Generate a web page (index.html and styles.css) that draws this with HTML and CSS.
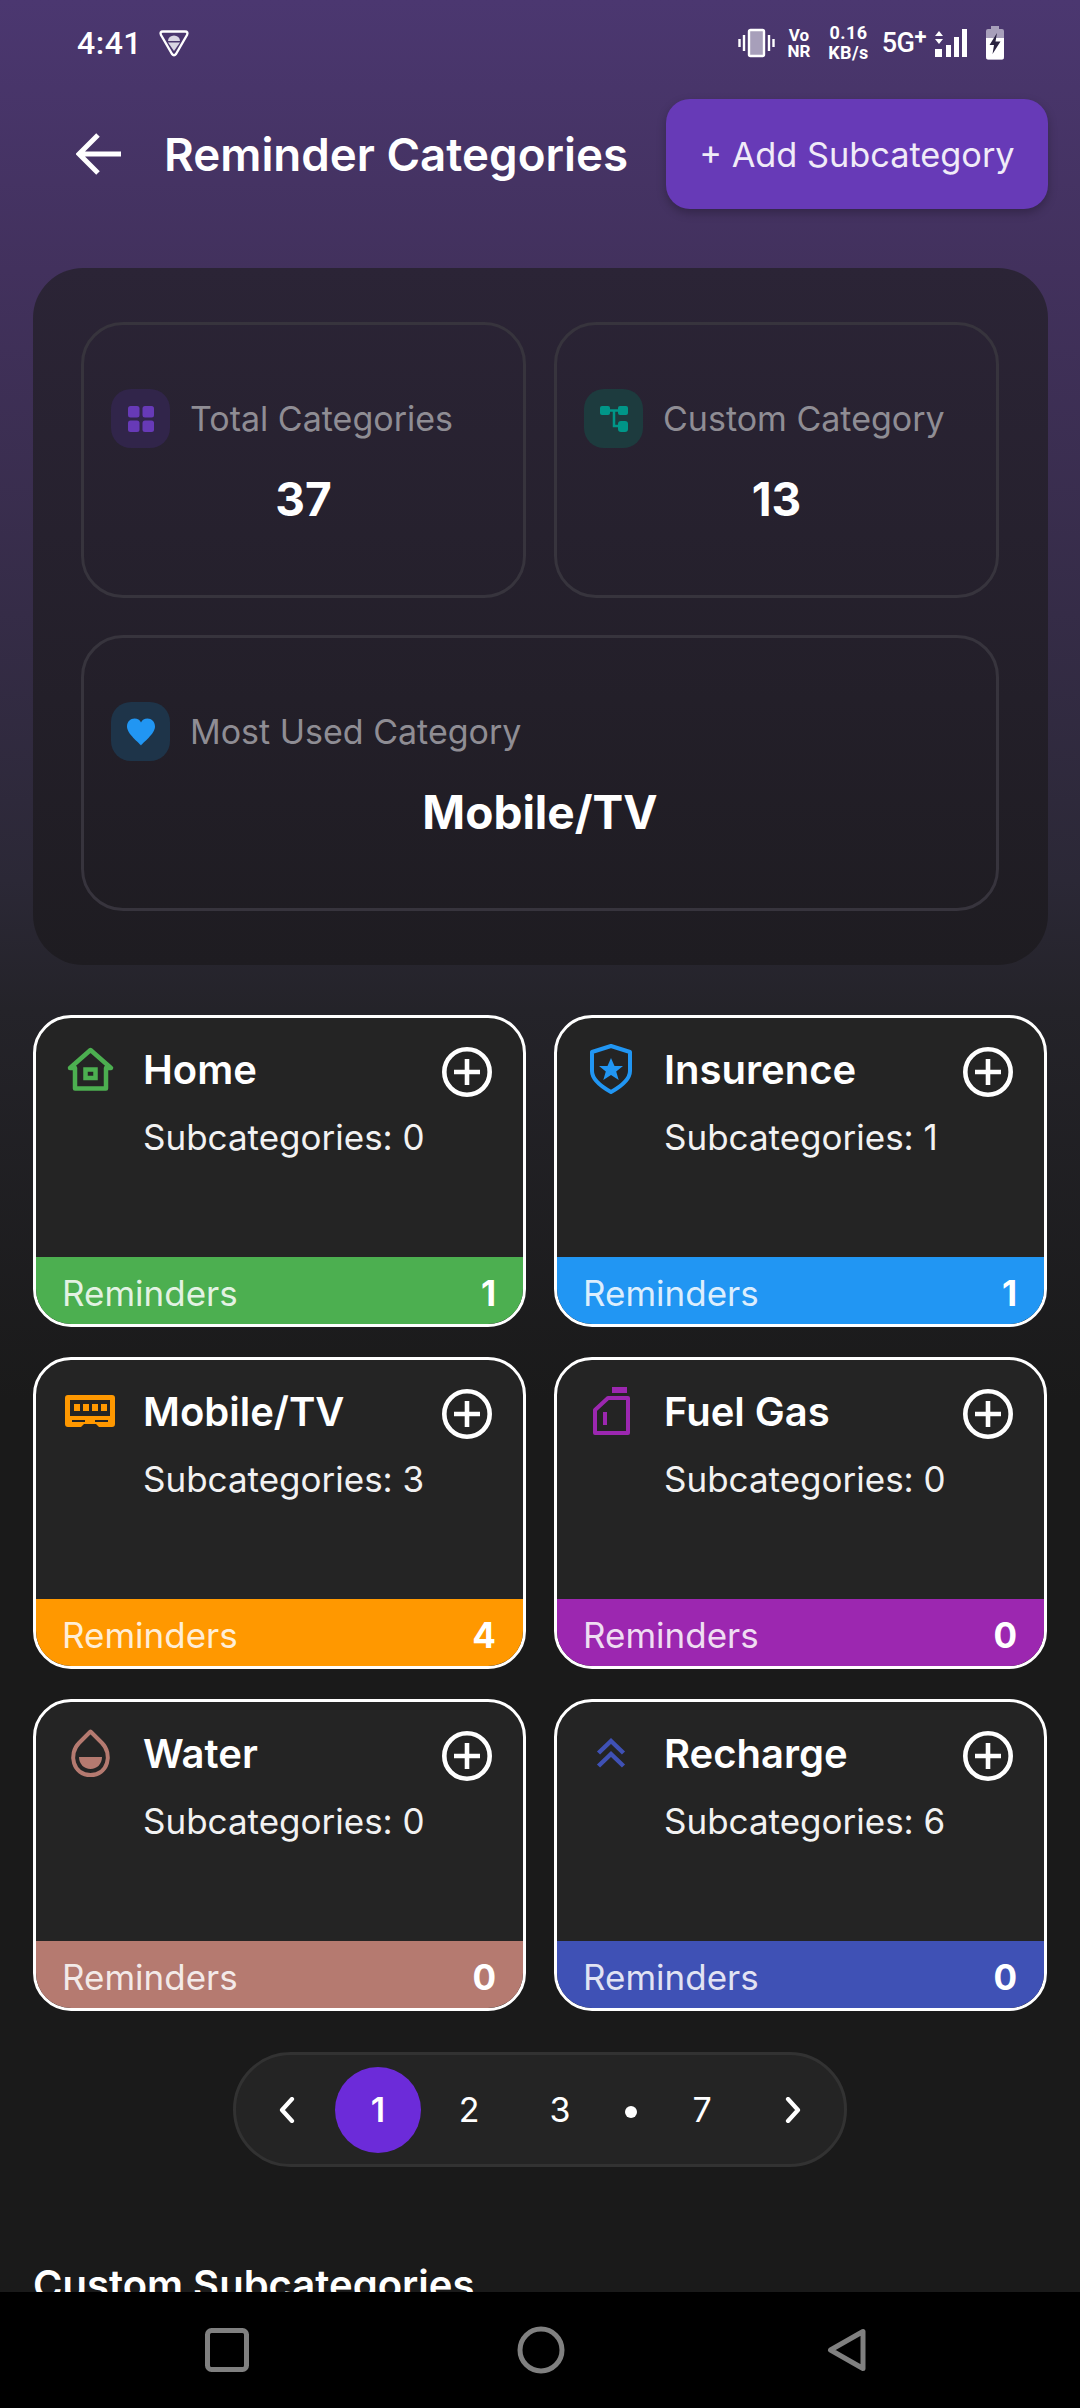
FILE: index.html
```html
<!DOCTYPE html>
<html lang="en">
<head>
    <meta charset="UTF-8">
    <meta name="viewport" content="width=device-width, initial-scale=1.0">
    <title>Reminder Categories</title>
    <link rel="stylesheet" href="styles.css">
</head>
<body>
    <div class="screen">
        <div class="status-bar">
            <div class="status-left">
                <span class="status-time">4:41</span>
                <svg class="status-shield" width="32" height="28" viewBox="0 0 32 28">
                    <path d="M5 2.500H27Q30.500 2.500 29 6L18 25Q16 27.500 14 25L3 6Q1.500 2.500 5 2.500Z" fill="none" stroke="#fff" stroke-width="2.400" stroke-linejoin="round"/>
                    <path d="M10 12A6 5.500 0 0 1 22 12Z" fill="#d9d5e2"/>
                    <path d="M10 13.500H22L16 22Z" fill="#d9d5e2"/>
                </svg>
            </div>
            <div class="status-right">
                <svg width="37" height="30" viewBox="0 0 37 30">
                    <rect x="11" y="2" width="15" height="26" rx="1.500" fill="#a79fba" stroke="#fff" stroke-width="2.400"/>
                    <path d="M1.500 11V19M6 7V23M31 7V23M35.500 11V19" stroke="#fff" stroke-width="2.400"/>
                </svg>
                <span class="status-vonr">Vo<br>NR</span>
                <span class="status-speed">0.16<br>KB/s</span>
                <span class="status-net">5G<sup>+</sup></span>
                <svg width="32" height="30" viewBox="0 0 32 30">
                    <path d="M4 3L8 8H0ZM4 16L0 11H8Z" fill="#fff"/>
                    <rect x="0" y="21" width="7" height="8" fill="#fff"/>
                    <rect x="11" y="17" width="5" height="12" fill="#fff"/>
                    <rect x="19" y="9" width="5" height="20" fill="#fff"/>
                    <rect x="27" y="1" width="5" height="28" fill="#fff"/>
                </svg>
                <svg width="18" height="34" viewBox="0 0 18 34">
                    <path d="M5 0H13V3H16Q18 3 18 5V31Q18 33.500 16 33.500H2Q0 33.500 0 31V5Q0 3 2 3H5Z" fill="#a79fba"/>
                    <path d="M0 12H18V31Q18 33.500 16 33.500H2Q0 33.500 0 31Z" fill="#fff"/>
                    <path d="M11 7L3.500 19H8L6.500 28L14.500 15.500H9.500Z" fill="#2a2340"/>
                </svg>
            </div>
        </div>

        <header class="top-bar">
            <svg class="back-icon" width="46" height="44" viewBox="0 0 46 44">
                <path d="M45 22H3M22 3L3 22L22 41" fill="none" stroke="#fff" stroke-width="5"/>
            </svg>
            <h1 class="page-title">Reminder Categories</h1>
            <button class="add-btn">+ Add Subcategory</button>
        </header>

        <section class="summary">
            <div class="stat-card">
                <div class="stat-head">
                    <span class="stat-icon stat-icon-purple">
                        <svg width="28" height="28" viewBox="0 0 28 28" fill="#673ab7">
                            <rect x="1" y="1" width="11.500" height="11.500" rx="2.500"/>
                            <rect x="15.500" y="1" width="11.500" height="11.500" rx="2.500"/>
                            <rect x="1" y="15.500" width="11.500" height="11.500" rx="2.500"/>
                            <rect x="15.500" y="15.500" width="11.500" height="11.500" rx="2.500"/>
                        </svg>
                    </span>
                    <span class="stat-label">Total Categories</span>
                </div>
                <div class="stat-value">37</div>
            </div>
            <div class="stat-card">
                <div class="stat-head">
                    <span class="stat-icon stat-icon-teal">
                        <svg width="30" height="30" viewBox="0 0 30 30" fill="#009688">
                            <rect x="1" y="2" width="10" height="9" rx="2"/>
                            <rect x="19" y="2" width="10" height="9" rx="2"/>
                            <rect x="19" y="17" width="10" height="11" rx="3"/>
                            <path d="M10 6.500H20M15 6.500V22H20" fill="none" stroke="#009688" stroke-width="2.500"/>
                        </svg>
                    </span>
                    <span class="stat-label">Custom Category</span>
                </div>
                <div class="stat-value">13</div>
            </div>
            <div class="stat-card stat-card-wide">
                <div class="stat-head">
                    <span class="stat-icon stat-icon-blue">
                        <svg width="30" height="28" viewBox="0 0 30 28">
                            <path d="M15 27.500C13 24.500 1 16 1 8.500C1 3.500 4.500 .5 8.500 .5C11.500 .5 14 2 15 4.500C16 2 18.500 .5 21.500 .5C25.500 .5 29 3.500 29 8.500C29 16 17 24.500 15 27.500Z" fill="#2196f3"/>
                        </svg>
                    </span>
                    <span class="stat-label">Most Used Category</span>
                </div>
                <div class="stat-value">Mobile/TV</div>
            </div>
        </section>

        <section class="cat-grid">
            <div class="cat-card">
                <div class="cat-head">
                    <svg class="cat-icon" width="50" height="50" viewBox="0 0 50 50">
                        <path d="M25.500 6L46 24H41V44.500H10V24H5Z" fill="none" stroke="#4caf50" stroke-width="4.500" stroke-linejoin="round"/>
                        <path d="M20.500 25.500H30.500V34H20.500Z" fill="none" stroke="#4caf50" stroke-width="4.500"/>
                    </svg>
                    <span class="cat-name">Home</span>
                    <svg class="plus-icon" width="50" height="50" viewBox="0 0 50 50">
                        <circle cx="25" cy="25" r="22.700" fill="none" stroke="#fff" stroke-width="4.600"/>
                        <path d="M25 12V38M12 25H38" stroke="#fff" stroke-width="4.600"/>
                    </svg>
                </div>
                <div class="cat-sub">Subcategories: 0</div>
                <div class="cat-bar bar-green"><span>Reminders</span><b>1</b></div>
            </div>
            <div class="cat-card">
                <div class="cat-head">
                    <svg class="cat-icon" width="50" height="50" viewBox="0 0 50 50">
                        <path d="M25 2L44 8V27C44 36 34 43 25 48C16 43 6 36 6 27V8Z" fill="none" stroke="#2196f3" stroke-width="4" stroke-linejoin="round"/>
                        <path d="M25 14L28.500 22H37L30.200 27.500L32.700 36L25 31L17.300 36L19.800 27.500L13 22H21.500Z" fill="#2196f3"/>
                    </svg>
                    <span class="cat-name">Insurence</span>
                    <svg class="plus-icon" width="50" height="50" viewBox="0 0 50 50">
                        <circle cx="25" cy="25" r="22.700" fill="none" stroke="#fff" stroke-width="4.600"/>
                        <path d="M25 12V38M12 25H38" stroke="#fff" stroke-width="4.600"/>
                    </svg>
                </div>
                <div class="cat-sub">Subcategories: 1</div>
                <div class="cat-bar bar-blue"><span>Reminders</span><b>1</b></div>
            </div>
            <div class="cat-card">
                <div class="cat-head">
                    <svg class="cat-icon" width="50" height="50" viewBox="0 0 50 50">
                        <path d="M3 9H47A3 3 0 0 1 50 12V38A3 3 0 0 1 47 41H34L31 38H19L16 41H3A3 3 0 0 1 0 38V12A3 3 0 0 1 3 9Z" fill="#ff9800"/>
                        <rect x="5" y="14" width="40" height="16" fill="#242424"/>
                        <path d="M9 18H15V25H9ZM18 18H24V25H18ZM27 18H33V25H27ZM36 18H42V25H36Z" fill="#ff9800"/>
                        <path d="M7 35H20M30 35H43" stroke="#242424" stroke-width="2"/>
                    </svg>
                    <span class="cat-name">Mobile/TV</span>
                    <svg class="plus-icon" width="50" height="50" viewBox="0 0 50 50">
                        <circle cx="25" cy="25" r="22.700" fill="none" stroke="#fff" stroke-width="4.600"/>
                        <path d="M25 12V38M12 25H38" stroke="#fff" stroke-width="4.600"/>
                    </svg>
                </div>
                <div class="cat-sub">Subcategories: 3</div>
                <div class="cat-bar bar-orange"><span>Reminders</span><b>4</b></div>
            </div>
            <div class="cat-card">
                <div class="cat-head">
                    <svg class="cat-icon" width="50" height="50" viewBox="0 0 50 50">
                        <path d="M26 1H41V7H26Z" fill="#9c27b0"/>
                        <path d="M22 12H42V47H9V24Z" fill="none" stroke="#9c27b0" stroke-width="4" stroke-linejoin="round"/>
                        <path d="M17 26H21V39H17Z" fill="#9c27b0"/>
                    </svg>
                    <span class="cat-name">Fuel Gas</span>
                    <svg class="plus-icon" width="50" height="50" viewBox="0 0 50 50">
                        <circle cx="25" cy="25" r="22.700" fill="none" stroke="#fff" stroke-width="4.600"/>
                        <path d="M25 12V38M12 25H38" stroke="#fff" stroke-width="4.600"/>
                    </svg>
                </div>
                <div class="cat-sub">Subcategories: 0</div>
                <div class="cat-bar bar-purple"><span>Reminders</span><b>0</b></div>
            </div>
            <div class="cat-card">
                <div class="cat-head">
                    <svg class="cat-icon" width="50" height="50" viewBox="0 0 50 50">
                        <path d="M25.500 3.500L37 15C48 26 43 47 25.500 47C8 47 3 26 14 15Z" fill="none" stroke="#b57a70" stroke-width="4" stroke-linejoin="round"/>
                        <path d="M14 29H37C37 36 32 41 25.500 41C19 41 14 36 14 29Z" fill="#b57a70"/>
                    </svg>
                    <span class="cat-name">Water</span>
                    <svg class="plus-icon" width="50" height="50" viewBox="0 0 50 50">
                        <circle cx="25" cy="25" r="22.700" fill="none" stroke="#fff" stroke-width="4.600"/>
                        <path d="M25 12V38M12 25H38" stroke="#fff" stroke-width="4.600"/>
                    </svg>
                </div>
                <div class="cat-sub">Subcategories: 0</div>
                <div class="cat-bar bar-rose"><span>Reminders</span><b>0</b></div>
            </div>
            <div class="cat-card">
                <div class="cat-head">
                    <svg class="cat-icon" width="50" height="50" viewBox="0 0 50 50">
                        <path d="M12.500 25L25 13L37.500 25M12.500 38L25 26L37.500 38" fill="none" stroke="#3f51b5" stroke-width="4.500"/>
                    </svg>
                    <span class="cat-name">Recharge</span>
                    <svg class="plus-icon" width="50" height="50" viewBox="0 0 50 50">
                        <circle cx="25" cy="25" r="22.700" fill="none" stroke="#fff" stroke-width="4.600"/>
                        <path d="M25 12V38M12 25H38" stroke="#fff" stroke-width="4.600"/>
                    </svg>
                </div>
                <div class="cat-sub">Subcategories: 6</div>
                <div class="cat-bar bar-indigo"><span>Reminders</span><b>0</b></div>
            </div>
        </section>

        <nav class="pager">
            <span class="pager-item">
                <svg width="16" height="26" viewBox="0 0 16 26"><path d="M13 2L3 13L13 24" fill="none" stroke="#fff" stroke-width="4.200" stroke-linecap="round" stroke-linejoin="round"/></svg>
            </span>
            <span class="pager-item pager-active">1</span>
            <span class="pager-item">2</span>
            <span class="pager-item">3</span>
            <span class="pager-dot"></span>
            <span class="pager-item">7</span>
            <span class="pager-item">
                <svg width="16" height="26" viewBox="0 0 16 26"><path d="M3 2L13 13L3 24" fill="none" stroke="#fff" stroke-width="4.200" stroke-linecap="round" stroke-linejoin="round"/></svg>
            </span>
        </nav>

        <h2 class="section-title">Custom Subcategories</h2>

        <div class="nav-bar">
            <svg width="44" height="44" viewBox="0 0 44 44"><rect x="2.500" y="2.500" width="39" height="39" rx="4" fill="none" stroke="#808080" stroke-width="5"/></svg>
            <svg width="48" height="48" viewBox="0 0 48 48"><circle cx="24" cy="24" r="21" fill="none" stroke="#808080" stroke-width="5"/></svg>
            <svg class="nav-back" width="40" height="44" viewBox="0 0 40 44"><path d="M36 3.500V40.500L3.500 22Z" fill="none" stroke="#808080" stroke-width="5" stroke-linejoin="round"/></svg>
        </div>
    </div>
</body>
</html>
```

FILE: styles.css
```css
* { box-sizing: border-box; }
html, body { margin: 0; padding: 0; }
body { width: 1080px; height: 2408px; overflow: hidden; background-color: #1a1a1a; color: #fff; font-family: Inter, "Noto Sans", sans-serif; }
.screen { position: relative; width: 1080px; height: 2408px; overflow: hidden; background: linear-gradient(180deg, #4b3770 0, #42315d 270px, #2b2836 880px, #242329 1010px, #1a1a1a 1400px); }

.status-bar { display: flex; justify-content: space-between; align-items: center; height: 86px; padding: 0 76px 0 77px; font-family: Roboto, sans-serif; }
.status-left { display: flex; align-items: center; gap: 16px; }
.status-time { font-size: 32px; font-weight: 500; letter-spacing: 0.5px; }
.status-right { display: flex; align-items: center; }
.status-vonr { margin-left: 12px; font-size: 17px; font-weight: 700; line-height: 16px; text-align: center; }
.status-speed { margin-left: 18px; font-size: 18px; font-weight: 700; line-height: 20px; text-align: center; letter-spacing: 0.4px; }
.status-net { margin: 0 9px 0 13px; font-size: 27px; font-weight: 500; letter-spacing: -0.5px; }
.status-net sup { font-size: 22px; font-weight: 700; line-height: 0; vertical-align: 8px; }
.status-right svg:last-child { margin-left: 19px; }

.top-bar { display: flex; align-items: center; height: 110px; margin: 13px 32px 0 76px; }
.page-title { margin: 0 0 0 42px; font-size: 45.700px; font-weight: 600; white-space: nowrap; }
.add-btn { margin-left: auto; width: 382px; height: 110px; padding: 0; border: none; border-radius: 24px; background-color: #673ab7; box-shadow: 0 4px 10px rgba(0,0,0,0.25); color: #f0ebf8; font-family: inherit; font-size: 34.300px; font-weight: 400; }

.summary { display: grid; grid-template-columns: 445px 445px; gap: 37px 28px; margin: 59px 32px 0 33px; padding: 54px 48px; border-radius: 50px; background: linear-gradient(180deg, #2b2436 0, #1e1c21 100%); }
.stat-card { display: flex; flex-direction: column; justify-content: center; height: 276px; padding: 0 27px 3px; border: 3px solid #37343d; border-radius: 42px; }
.stat-card-wide { grid-column: 1 / 3; }
.stat-head { display: flex; align-items: center; gap: 20px; }
.stat-icon { display: flex; justify-content: center; align-items: center; width: 59px; height: 59px; border-radius: 20px; flex-shrink: 0; }
.stat-icon-purple { background-color: #31254a; }
.stat-icon-teal { background-color: #1d3b3e; }
.stat-icon-blue { background-color: #1e3449; }
.stat-label { font-size: 34px; color: #8f8d94; white-space: nowrap; }
.stat-value { margin-top: 22px; font-size: 46px; font-weight: 700; line-height: 58px; text-align: center; }

.cat-grid { display: grid; grid-template-columns: 493px 493px; grid-auto-rows: 312px; gap: 30px 28px; margin: 50px 33px 0; }
.cat-card { display: flex; flex-direction: column; overflow: hidden; border: 3px solid #fff; border-radius: 38px; background-color: #242424; }
.cat-head { display: flex; align-items: center; height: 50px; margin: 26px 31px 0 29px; }
.cat-name { margin-left: 28px; font-size: 40px; font-weight: 600; }
.plus-icon { margin: 6px 0 0 auto; }
.cat-sub { margin: 23px 0 0 107px; font-size: 35px; line-height: 40px; color: #f2f2f2; }
.cat-bar { display: flex; justify-content: space-between; align-items: center; height: 67px; margin-top: auto; padding: 4px 27px 0 26px; font-size: 35px; }
.cat-bar span { color: rgba(255,255,255,0.85); }
.cat-bar b { font-weight: 700; }
.bar-green { background-color: #4caf50; }
.bar-blue { background-color: #2196f3; }
.bar-orange { background-color: #ff9800; }
.bar-purple { background-color: #9c27b0; }
.bar-rose { background-color: #b57a70; }
.bar-indigo { background-color: #3f51b5; }

.pager { display: flex; align-items: center; gap: 5px; width: 614px; height: 115px; margin: 41px 0 0 233px; padding: 0 8px; border: 3px solid #323232; border-radius: 58px; background-color: #242424; }
.pager-item { display: flex; justify-content: center; align-items: center; width: 86px; height: 86px; border-radius: 50%; font-size: 34px; }
.pager-active { background-color: #6c2bd9; font-weight: 600; }
.pager-dot { display: flex; justify-content: center; align-items: center; width: 46px; }
.pager-dot::before { content: ""; width: 12px; height: 12px; margin-top: 4px; border-radius: 50%; background-color: #fff; }

.section-title { margin: 93px 0 0 33px; font-size: 40px; font-weight: 600; line-height: 50px; }

.nav-bar { position: absolute; left: 0; right: 0; bottom: 0; display: flex; justify-content: center; align-items: center; gap: 268px; height: 116px; padding-right: 8px; background-color: #000; }
.nav-back { margin-left: -6px; }
```
